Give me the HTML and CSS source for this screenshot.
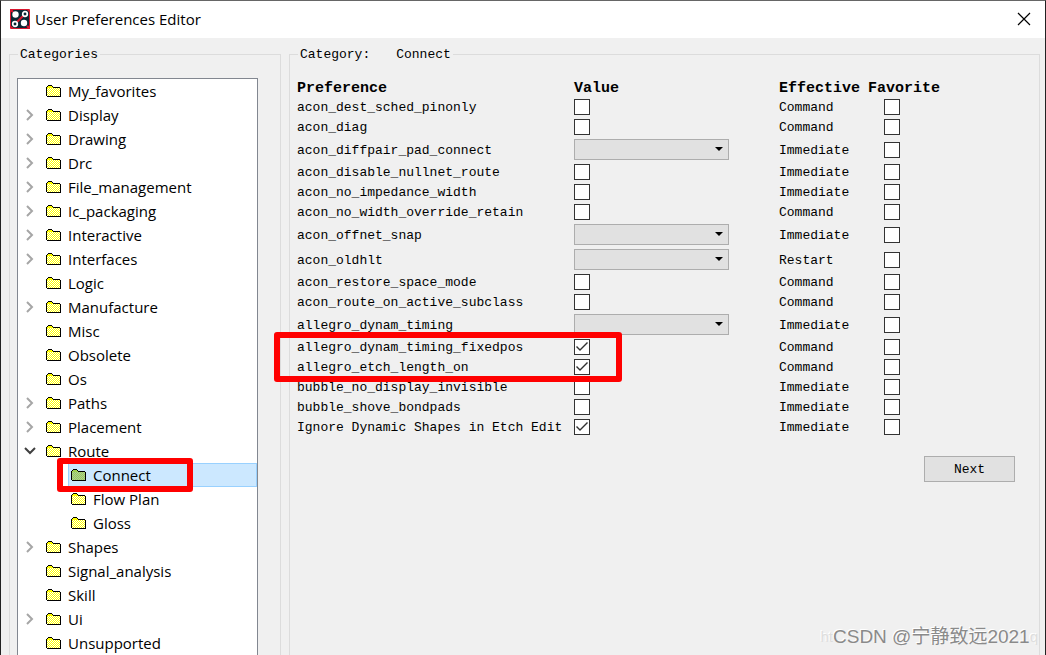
FILE: index.html
```html
<!DOCTYPE html>
<html lang="en">
<head>
<meta charset="utf-8">
<title>User Preferences Editor</title>
<link rel="stylesheet" href="styles.css">
</head>
<body>
<svg class="defs" aria-hidden="true">
  <defs>
    <path id="dots" d="M2 3h1v1h-1zm2 0h1v1h-1zm2 0h1v1h-1zm2 0h1v1h-1zm2 0h1v1h-1zm2 0h1v1h-1zM1 4h1v1h-1zm2 0h1v1h-1zm2 0h1v1h-1zm2 0h1v1h-1zm2 0h1v1h-1zm2 0h1v1h-1zm2 0h1v1h-1z"/>
    <symbol id="folder" viewBox="0 0 16 12" shape-rendering="crispEdges">
      <path class="paper" d="M2 1h4v1h1v1h7v8H1V2h1z"/>
      <g class="dots"><use href="#dots"/><use href="#dots" y="2"/><use href="#dots" y="4"/><use href="#dots" y="6"/></g>
      <path d="M2 0h4v1H2zM1 1h1v1H1zM6 1h1v1H6zM0 2h1v9H0zM7 2h7v1H7zM14 3h1v8h-1zM1 11h14v1H1z" fill="#000"/>
    </symbol>
    <symbol id="right" viewBox="0 0 8 12"><path d="M1 1l5 5-5 5" fill="none" stroke="#a6a6a6" stroke-width="2"/></symbol>
    <symbol id="down" viewBox="0 0 12 8"><path d="M1 1l5 5 5-5" fill="none" stroke="#404040" stroke-width="2"/></symbol>
  </defs>
</svg>
<div class="window">
  <header class="titlebar">
    <svg class="logo" viewBox="0 0 20 20" aria-hidden="true">
      <rect width="20" height="20" rx="1" fill="#d8172f"/>
      <path d="M3 1h14l2 2v13l-1 3H4l-3-2V3z" fill="#0b2734"/>
      <path d="M0 0l3 3M17 17l3 3M7 13l6-6" stroke="#d8172f" stroke-width="2"/>
      <circle cx="5.500" cy="5.500" r="3.200" fill="#fff"/><circle cx="14" cy="14" r="3.200" fill="#fff"/>
      <circle cx="15" cy="5" r="2.300" fill="#0b2734" stroke="#fff" stroke-width="1.700"/>
      <circle cx="5" cy="15" r="2.300" fill="#0b2734" stroke="#fff" stroke-width="1.700"/>
    </svg>
    <h1 class="title">User Preferences Editor</h1>
    <button class="close" type="button" aria-label="Close"><svg width="14" height="14" viewBox="0 0 14 14"><path d="M1 1l12 12M13 1L1 13" stroke="#000" stroke-width="1.200"/></svg></button>
  </header>
  <main class="content">
    <fieldset class="group categories">
      <legend>Categories</legend>
      <ul class="tree">
        <li class="node"><span class="twisty"></span><a href="#"><svg class="folder"><use href="#folder"/></svg>My_favorites</a></li>
        <li class="node"><button class="twisty" aria-label="Expand Display"><svg class="right"><use href="#right"/></svg></button><a href="#"><svg class="folder"><use href="#folder"/></svg>Display</a></li>
        <li class="node"><button class="twisty" aria-label="Expand Drawing"><svg class="right"><use href="#right"/></svg></button><a href="#"><svg class="folder"><use href="#folder"/></svg>Drawing</a></li>
        <li class="node"><button class="twisty" aria-label="Expand Drc"><svg class="right"><use href="#right"/></svg></button><a href="#"><svg class="folder"><use href="#folder"/></svg>Drc</a></li>
        <li class="node"><button class="twisty" aria-label="Expand File_management"><svg class="right"><use href="#right"/></svg></button><a href="#"><svg class="folder"><use href="#folder"/></svg>File_management</a></li>
        <li class="node"><button class="twisty" aria-label="Expand Ic_packaging"><svg class="right"><use href="#right"/></svg></button><a href="#"><svg class="folder"><use href="#folder"/></svg>Ic_packaging</a></li>
        <li class="node"><button class="twisty" aria-label="Expand Interactive"><svg class="right"><use href="#right"/></svg></button><a href="#"><svg class="folder"><use href="#folder"/></svg>Interactive</a></li>
        <li class="node"><button class="twisty" aria-label="Expand Interfaces"><svg class="right"><use href="#right"/></svg></button><a href="#"><svg class="folder"><use href="#folder"/></svg>Interfaces</a></li>
        <li class="node"><span class="twisty"></span><a href="#"><svg class="folder"><use href="#folder"/></svg>Logic</a></li>
        <li class="node"><button class="twisty" aria-label="Expand Manufacture"><svg class="right"><use href="#right"/></svg></button><a href="#"><svg class="folder"><use href="#folder"/></svg>Manufacture</a></li>
        <li class="node"><span class="twisty"></span><a href="#"><svg class="folder"><use href="#folder"/></svg>Misc</a></li>
        <li class="node"><span class="twisty"></span><a href="#"><svg class="folder"><use href="#folder"/></svg>Obsolete</a></li>
        <li class="node"><span class="twisty"></span><a href="#"><svg class="folder"><use href="#folder"/></svg>Os</a></li>
        <li class="node"><button class="twisty" aria-label="Expand Paths"><svg class="right"><use href="#right"/></svg></button><a href="#"><svg class="folder"><use href="#folder"/></svg>Paths</a></li>
        <li class="node"><button class="twisty" aria-label="Expand Placement"><svg class="right"><use href="#right"/></svg></button><a href="#"><svg class="folder"><use href="#folder"/></svg>Placement</a></li>
        <li class="node"><button class="twisty open" aria-label="Collapse Route"><svg class="down"><use href="#down"/></svg></button><a href="#"><svg class="folder"><use href="#folder"/></svg>Route</a></li>
        <li class="node child selected"><a href="#"><svg class="folder"><use href="#folder"/></svg>Connect</a><span class="mark mark-node"></span></li>
        <li class="node child"><a href="#"><svg class="folder"><use href="#folder"/></svg>Flow Plan</a></li>
        <li class="node child"><a href="#"><svg class="folder"><use href="#folder"/></svg>Gloss</a></li>
        <li class="node"><button class="twisty" aria-label="Expand Shapes"><svg class="right"><use href="#right"/></svg></button><a href="#"><svg class="folder"><use href="#folder"/></svg>Shapes</a></li>
        <li class="node"><span class="twisty"></span><a href="#"><svg class="folder"><use href="#folder"/></svg>Signal_analysis</a></li>
        <li class="node"><span class="twisty"></span><a href="#"><svg class="folder"><use href="#folder"/></svg>Skill</a></li>
        <li class="node"><button class="twisty" aria-label="Expand Ui"><svg class="right"><use href="#right"/></svg></button><a href="#"><svg class="folder"><use href="#folder"/></svg>Ui</a></li>
        <li class="node"><span class="twisty"></span><a href="#"><svg class="folder"><use href="#folder"/></svg>Unsupported</a></li>
      </ul>
    </fieldset>
    <fieldset class="group prefs">
      <legend><span class="legend-row"><span>Category:</span><span>Connect</span></span></legend>
      <table class="table">
        <colgroup><col class="c-name"><col class="c-value"><col class="c-effective"><col class="c-favorite"></colgroup>
        <thead><tr><th>Preference</th><th>Value</th><th>Effective</th><th>Favorite</th></tr></thead>
        <tbody>
          <tr><td><label for="p1">acon_dest_sched_pinonly</label></td><td class="value"><input id="p1" type="checkbox"></td><td>Command</td><td class="fav"><input type="checkbox" aria-label="Favorite acon_dest_sched_pinonly"></td></tr>
          <tr><td><label for="p2">acon_diag</label></td><td class="value"><input id="p2" type="checkbox"></td><td>Command</td><td class="fav"><input type="checkbox" aria-label="Favorite acon_diag"></td></tr>
          <tr class="tall"><td><label for="p3">acon_diffpair_pad_connect</label></td><td class="value"><span class="combo"><select id="p3"><option></option></select></span></td><td>Immediate</td><td class="fav"><input type="checkbox" aria-label="Favorite acon_diffpair_pad_connect"></td></tr>
          <tr><td><label for="p4">acon_disable_nullnet_route</label></td><td class="value"><input id="p4" type="checkbox"></td><td>Immediate</td><td class="fav"><input type="checkbox" aria-label="Favorite acon_disable_nullnet_route"></td></tr>
          <tr><td><label for="p5">acon_no_impedance_width</label></td><td class="value"><input id="p5" type="checkbox"></td><td>Immediate</td><td class="fav"><input type="checkbox" aria-label="Favorite acon_no_impedance_width"></td></tr>
          <tr><td><label for="p6">acon_no_width_override_retain</label></td><td class="value"><input id="p6" type="checkbox"></td><td>Command</td><td class="fav"><input type="checkbox" aria-label="Favorite acon_no_width_override_retain"></td></tr>
          <tr class="tall"><td><label for="p7">acon_offnet_snap</label></td><td class="value"><span class="combo"><select id="p7"><option></option></select></span></td><td>Immediate</td><td class="fav"><input type="checkbox" aria-label="Favorite acon_offnet_snap"></td></tr>
          <tr class="tall"><td><label for="p8">acon_oldhlt</label></td><td class="value"><span class="combo"><select id="p8"><option></option></select></span></td><td>Restart</td><td class="fav"><input type="checkbox" aria-label="Favorite acon_oldhlt"></td></tr>
          <tr><td><label for="p9">acon_restore_space_mode</label></td><td class="value"><input id="p9" type="checkbox"></td><td>Command</td><td class="fav"><input type="checkbox" aria-label="Favorite acon_restore_space_mode"></td></tr>
          <tr><td><label for="p10">acon_route_on_active_subclass</label></td><td class="value"><input id="p10" type="checkbox"></td><td>Command</td><td class="fav"><input type="checkbox" aria-label="Favorite acon_route_on_active_subclass"></td></tr>
          <tr class="tall"><td><label for="p11">allegro_dynam_timing</label></td><td class="value"><span class="combo"><select id="p11"><option></option></select></span></td><td>Immediate</td><td class="fav"><input type="checkbox" aria-label="Favorite allegro_dynam_timing"></td></tr>
          <tr><td class="anchor"><label for="p12">allegro_dynam_timing_fixedpos</label><span class="mark mark-rows"></span></td><td class="value"><input id="p12" type="checkbox" checked></td><td>Command</td><td class="fav"><input type="checkbox" aria-label="Favorite allegro_dynam_timing_fixedpos"></td></tr>
          <tr><td><label for="p13">allegro_etch_length_on</label></td><td class="value"><input id="p13" type="checkbox" checked></td><td>Command</td><td class="fav"><input type="checkbox" aria-label="Favorite allegro_etch_length_on"></td></tr>
          <tr><td><label for="p14">bubble_no_display_invisible</label></td><td class="value"><input id="p14" type="checkbox"></td><td>Immediate</td><td class="fav"><input type="checkbox" aria-label="Favorite bubble_no_display_invisible"></td></tr>
          <tr><td><label for="p15">bubble_shove_bondpads</label></td><td class="value"><input id="p15" type="checkbox"></td><td>Immediate</td><td class="fav"><input type="checkbox" aria-label="Favorite bubble_shove_bondpads"></td></tr>
          <tr><td><label for="p16">Ignore Dynamic Shapes in Etch Edit</label></td><td class="value"><input id="p16" type="checkbox" checked></td><td>Immediate</td><td class="fav"><input type="checkbox" aria-label="Favorite Ignore Dynamic Shapes in Etch Edit"></td></tr>
        </tbody>
      </table>
      <div class="actions"><button class="next" type="button">Next</button></div>
    </fieldset>
  </main>
  <div class="watermark"><span class="faint">ht</span><span>CSDN @宁静致远2021</span><span class="faint">q</span></div>
</div>
</body>
</html>
```

FILE: styles.css
```css
* { box-sizing: border-box; }
body {
  margin: 0;
  height: 100vh;
  overflow: hidden;
  background: #f0f0f0;
  color: #000;
  font: 13px/18px "Liberation Mono", monospace;
}
.defs { position: absolute; width: 0; height: 0; }
.window {
  position: relative;
  height: 100%;
  display: flex;
  flex-direction: column;
  border: 1px solid #222;
  border-top-color: #666;
  border-bottom: 0;
  overflow: hidden;
}
.titlebar {
  flex: none;
  display: flex;
  align-items: center;
  height: 37px;
  padding: 0 14px 1px 9px;
  background: #fff;
}
.logo { width: 20px; height: 20px; }
.title {
  flex: 1;
  margin: 0 0 0 5px;
  font: 15px/20px "Open Sans", sans-serif;
}
.close { display: flex; padding: 0; border: 0; background: none; }
.content {
  flex: 1;
  min-height: 0;
  display: flex;
  gap: 8px;
  padding: 6px 5px 0 8px;
}
.group {
  min-width: 0;
  margin: 0;
  border: 1px solid #dcdcdc;
  border-bottom: 0;
}
.group legend { margin-left: 1px; padding: 2px 2px 0; }
.categories { flex: 0 0 272px; padding: 14px 22px 0 7px; }
.prefs { flex: 1; padding: 14px 24px 0 7px; }
.legend-row { display: flex; gap: 26px; }
.tree {
  height: 100%;
  margin: 0;
  padding: 0;
  list-style: none;
  overflow: hidden;
  background: #fff;
  border: 1px solid #828790;
  border-bottom: 0;
  font: 15px/24px "Open Sans", sans-serif;
}
.node { position: relative; display: flex; height: 24px; padding-left: 4px; }
.node a {
  flex: 1;
  display: flex;
  align-items: center;
  gap: 6px;
  color: #000;
  text-decoration: none;
}
.twisty {
  flex: 0 0 24px;
  display: flex;
  align-items: center;
  padding: 0 0 0 4px;
  border: 0;
  background: none;
}
.open { padding-left: 2px; }
.folder { width: 16px; height: 12px; flex: none; }
.paper { fill: var(--paper, #ffff00); }
.dots { fill: var(--dots, #ffffff); }
.right { width: 8px; height: 12px; }
.down { width: 12px; height: 8px; }
.child { padding-left: 50px; }
.child a { padding-left: 3px; }
.selected { --paper: #9fd050; --dots: #a8c8a0; }
.selected a { background: #cce8ff; box-shadow: inset 0 0 0 1px #99d1ff; }
.mark {
  position: absolute;
  border: 6px solid #f00;
  border-radius: 3px;
  pointer-events: none;
}
.mark-node { left: 39px; top: -5px; width: 136px; height: 34px; z-index: 1; }
.anchor { position: relative; }
.mark-rows { left: -23px; top: -5px; width: 348px; height: 50px; z-index: 1; }
.table { width: 100%; table-layout: fixed; border-collapse: collapse; }
.c-name { width: 277px; }
.c-value { width: 205px; }
.c-effective { width: 89px; }
.table th {
  height: 19px;
  padding: 2px 0 0;
  text-align: left;
  white-space: nowrap;
  font-size: 15px;
  line-height: 17px;
}
.table td { height: 20px; padding: 2px 0 0; white-space: nowrap; }
.table .tall td { height: 25px; }
.table .value { padding: 0; }
.table .fav { padding: 0 0 0 16px; }
input {
  appearance: none;
  display: block;
  width: 16px;
  height: 16px;
  margin: 0;
  background: #fff;
  border: 1px solid #333;
}
input:checked::before {
  content: "";
  display: block;
  width: 14px;
  height: 14px;
  background: #333;
  clip-path: polygon(1px 7px, 2px 6px, 5px 9px, 12px 2px, 13px 3px, 5px 11px);
}
.combo { position: relative; display: block; width: 155px; }
.combo::after {
  content: "";
  position: absolute;
  right: 6px;
  top: 8px;
  border: 4px solid transparent;
  border-top-color: #000;
  border-bottom: 0;
}
select {
  appearance: none;
  display: block;
  width: 100%;
  height: 21px;
  background: #e1e1e1;
  border: 1px solid #adadad;
  border-radius: 0;
}
.actions { display: flex; justify-content: flex-end; margin-top: 19px; }
.next {
  width: 91px;
  height: 26px;
  padding: 2px 0 0;
  border: 1px solid #adadad;
  background: #e1e1e1;
  color: #000;
  font: inherit;
}
.watermark {
  position: absolute;
  right: 7px;
  bottom: 5px;
  display: flex;
  color: #8a8a8a;
  font: 19px/26px "Liberation Sans", "Noto Sans CJK SC", sans-serif;
  text-shadow: -1px -1px 0 #fff;
}
.faint {
  color: #dedede;
  font-size: 15px;
}
```
